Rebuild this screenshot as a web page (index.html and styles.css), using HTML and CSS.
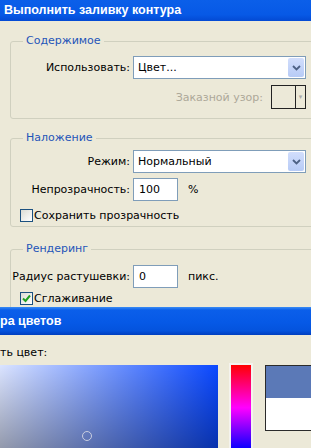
FILE: index.html
```html
<!DOCTYPE html>
<html>
<head>
  <meta charset="utf-8">
  <meta name="viewport" content="width=device-width, initial-scale=1">
  <title>Выполнить заливку контура</title>
  <link rel="stylesheet" href="styles.css">
</head>
<body>

<!-- fill path dialog -->
<div class="window fill-window">
  <div class="titlebar">Выполнить заливку контура</div>
  <div class="dialog-body">

    <fieldset class="group group-content">
      <legend>Содержимое</legend>
      <div class="form-row">
        <span class="form-label">Использовать:</span>
        <div class="select"><span class="select-text">Цвет...</span><span class="select-btn"><svg width="9" height="6" viewBox="0 0 9 6"><path d="M1 1 L4.5 4.5 L8 1" fill="none" stroke="#4d6185" stroke-width="1.8"/></svg></span></div>
      </div>
      <div class="pattern-row">
        <span class="disabled">Заказной узор:</span>
        <div class="pattern"><span class="pattern-box"></span><span class="pattern-btn">&#9662;</span></div>
      </div>
    </fieldset>

    <fieldset class="group group-blend">
      <legend>Наложение</legend>
      <div class="form-row">
        <span class="form-label">Режим:</span>
        <div class="select"><span class="select-text">Нормальный</span><span class="select-btn"><svg width="9" height="6" viewBox="0 0 9 6"><path d="M1 1 L4.5 4.5 L8 1" fill="none" stroke="#4d6185" stroke-width="1.8"/></svg></span></div>
      </div>
      <div class="form-row gap-row">
        <span class="form-label">Непрозрачность:</span>
        <div class="textbox">100</div>
        <span class="unit">%</span>
      </div>
      <div class="check-row">
        <span class="checkbox"></span>
        <span>Сохранить прозрачность</span>
      </div>
    </fieldset>

    <fieldset class="group group-render">
      <legend>Рендеринг</legend>
      <div class="form-row">
        <span class="form-label">Радиус растушевки:</span>
        <div class="textbox">0</div>
        <span class="unit">пикс.</span>
      </div>
      <div class="check-row render-check">
        <span class="checkbox checked"><svg width="11" height="11" viewBox="0 0 11 11"><path d="M2 5.5 L4.5 8 L9 2.5" fill="none" stroke="#21a121" stroke-width="2"/></svg></span>
        <span>Сглаживание</span>
      </div>
    </fieldset>

  </div>
</div>

<!-- color picker window on top -->
<div class="window picker-window">
  <div class="titlebar titlebar-big">ра цветов</div>
  <div class="picker-body">
    <div class="picker-caption">ть цвет:</div>
    <div class="picker-main">
      <div class="field"><span class="marker"></span></div>
      <div class="hue-frame"><div class="hue"></div></div>
      <div class="swatch"><div class="swatch-new"></div><div class="swatch-old"></div></div>
    </div>
  </div>
</div>

</body>
</html>
```

FILE: styles.css
```css
html, body {
  margin: 0;
  padding: 0;
}

body {
  width: 311px;
  height: 448px;
  overflow: hidden;
  background-color: #ece9d8;
  font-family: "DejaVu Sans", sans-serif;
  font-size: 11px;
  color: #000;
}

.window {
  width: 311px;
  overflow: hidden;
  background-color: #ece9d8;
}

.fill-window {
  height: 307px;
}

.titlebar {
  height: 21px;
  padding-left: 4px;
  background: linear-gradient(#0b5fe9, #0759e6 70%, #0349d3);
  color: #fff;
  font-family: "Liberation Sans", sans-serif;
  font-weight: bold;
  font-size: 12.5px;
  line-height: 20px;
  white-space: nowrap;
}

.dialog-body {
  padding-top: 13px;
}

/* group boxes */
.group {
  margin: 0 0 0 10px;
  padding: 0 0 9px 0;
  border: 1px solid #d0d0bf;
  border-radius: 3px;
  width: 320px;
}

.group legend {
  margin-left: 12px;
  padding: 0 3px;
  color: #1f55b8;
  line-height: 14px;
}

.group-content {
  padding-top: 8px;
}

.group-blend {
  margin-top: 12px;
  padding-top: 5px;
  padding-bottom: 4px;
}

.group-render {
  margin-top: 15px;
  padding-top: 9px;
}

.form-row {
  display: flex;
  align-items: center;
}

.gap-row {
  margin-top: 5px;
}

.form-label {
  width: 119px;
  margin-right: 3px;
  text-align: right;
  white-space: nowrap;
}

.select {
  display: flex;
  align-items: center;
  width: 173px;
  height: 23px;
  box-sizing: border-box;
  border: 1px solid #7f9db9;
  background-color: #fff;
}

.select-text {
  flex: 1;
  padding-left: 4px;
}

.select-btn {
  display: flex;
  align-items: center;
  justify-content: center;
  width: 16px;
  height: 19px;
  margin-right: 1px;
  border-radius: 2px;
  background: linear-gradient(#d2defc, #b7cbf6);
}

.pattern-row {
  display: flex;
  align-items: center;
  justify-content: flex-end;
  width: 295px;
  margin-top: 6px;
  gap: 8px;
}

.disabled {
  color: #aca899;
}

.pattern {
  display: flex;
  width: 35px;
  height: 24px;
  box-sizing: border-box;
  border: 1px solid #222;
}

.pattern-box {
  flex: 1;
  border-right: 1px solid #222;
}

.pattern-btn {
  width: 9px;
  color: #aaa;
  font-size: 7px;
  line-height: 22px;
  text-align: center;
}

.textbox {
  width: 45px;
  height: 23px;
  box-sizing: border-box;
  border: 1px solid #7f9db9;
  background-color: #fff;
  padding-left: 5px;
  line-height: 21px;
}

.unit {
  margin-left: 10px;
}

.check-row {
  display: flex;
  align-items: center;
  margin-top: 8px;
  padding-left: 9px;
}

.render-check {
  margin-top: 4px;
}

.checkbox {
  display: flex;
  align-items: center;
  justify-content: center;
  width: 13px;
  height: 13px;
  box-sizing: border-box;
  margin-right: 1px;
  border: 1px solid #1c5180;
  background: linear-gradient(135deg, #dcdcd4, #fff);
}

/* color picker */
.picker-window {
  height: 141px;
}

.titlebar-big {
  height: 28px;
  line-height: 28px;
  padding-left: 0;
  background: linear-gradient(#3a8cf4, #0b5fea 3px, #0659e6 55%, #0453dd 85%, #003fbf);
}

.picker-body {
  padding-top: 11px;
}

.picker-caption {
  line-height: 14px;
  white-space: nowrap;
}

.picker-main {
  display: flex;
  margin-top: 5px;
}

.field {
  position: relative;
  flex: none;
  width: 256px;
  height: 256px;
  margin-left: -38px;
  background:
    linear-gradient(rgba(0, 0, 0, 0), #000),
    linear-gradient(to right, #fff, #0a48ff);
}

.marker {
  position: absolute;
  left: 120px;
  top: 66px;
  width: 8px;
  height: 8px;
  border: 1.5px solid #c9cde0;
  border-radius: 50%;
}

.hue-frame {
  flex: none;
  margin-left: 11px;
  margin-top: -2px;
  padding: 2px;
  background-color: #f4f3ee;
}

.hue {
  width: 20px;
  height: 256px;
  background: linear-gradient(#ff0000, #ff00ff 16.7%, #0000ff 33.3%, #00ffff 50%, #00ff00 66.7%, #ffff00 83.3%, #ff0000);
}

.swatch {
  flex: none;
  width: 70px;
  height: 66px;
  margin-left: 12px;
  box-sizing: border-box;
  border: 1px solid #2b2b2b;
}

.swatch-new {
  height: 32px;
  background-color: #5b79b7;
}

.swatch-old {
  height: 32px;
  background-color: #fff;
}
```
